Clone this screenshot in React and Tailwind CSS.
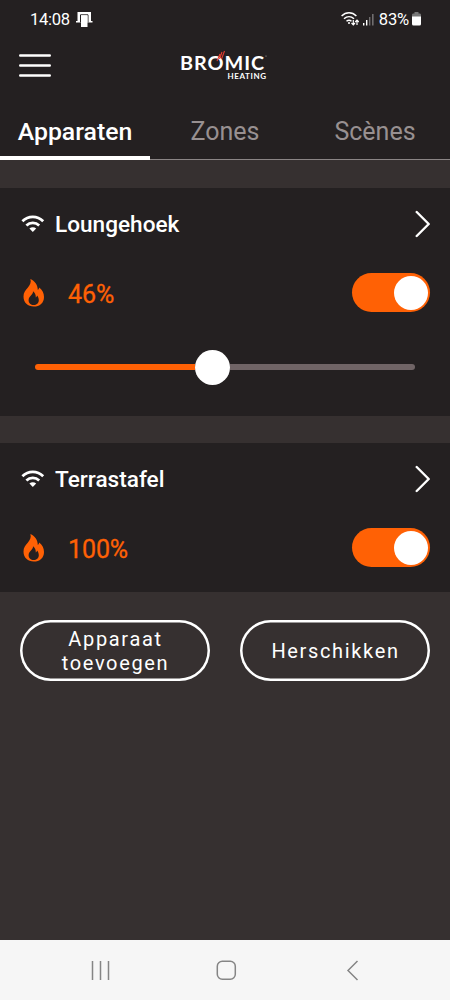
import React from 'react';

function Wifi() {
  return (
    <svg className="w-[24px] h-[20px] shrink-0" viewBox="0 0 24 20" fill="none" stroke="#fff" strokeWidth="2.7">
      <path d="M1.4 7.3C7.3 1.3 16.3 1.3 22.2 7.3" />
      <path d="M5.4 11.5C9 8 14.6 8 18.2 11.5" />
      <path d="M11.8 18L8.4 14.6C10.4 12.8 13.2 12.8 15.2 14.6Z" fill="#fff" stroke="none" />
    </svg>
  );
}

function Flame() {
  return (
    <svg className="w-[22px] h-[28px] shrink-0" viewBox="0 0 22 28" fill="#ff6105" fillRule="evenodd">
      <path d="M7.4 0C11.6 1.8 14.9 6 14.8 11C15.6 10.4 16 9.7 16.2 8.6C19.4 11 21 14.2 21 18C21 24 16.6 27.6 10.8 27.6C4.9 27.6 0.5 23.8 0.5 17.6C0.5 9.6 9.6 7.6 7.4 0ZM10 12.2C10.4 15.8 5.6 17 5.6 21.2C5.6 24.2 7.9 26 10.6 26C13.6 26 15.8 24.2 15.8 21.2C15.8 19.2 15 17.6 14 16.6C13.9 17.6 13.5 18.2 12.8 18.5C13 16 12 13.6 10 12.2Z" />
    </svg>
  );
}

function Device({ name, value, level }) {
  return (
    <section className={level ? "bg-[#242021] h-[228px]" : "bg-[#242021] h-[149px]"}>
      <div className="h-[72px] pl-[21px] pr-[20px] flex items-center">
        <Wifi />
        <h2 className="ml-[10px] mt-[2px] flex-1 text-[22.6px] leading-none font-medium text-white">{name}</h2>
        <svg className="w-[18px] h-[28px]" viewBox="0 0 18 28" fill="none" stroke="#fff" strokeWidth="2.4" strokeLinecap="round" strokeLinejoin="round">
          <path d="M4.7 2L16.7 14L4.7 26" />
        </svg>
      </div>
      <div className="h-[65px] pl-[23px] pr-[20px] flex items-center">
        <Flame />
        <span className="ml-[23px] mt-[3px] flex-1 text-[25px] leading-none tracking-[-0.1px] [-webkit-text-stroke:0.3px_#ff6105] text-[#ff6105]">{value}</span>
        <div className="w-[78px] h-[39px] rounded-full bg-[#ff6105] flex items-center justify-end pr-[2px]">
          <div className="size-[34px] rounded-full bg-white" />
        </div>
      </div>
      {level && (
        <div className="h-[84px] mx-[35px] flex items-center">
          <div className="h-[6px] rounded-l-full bg-[#ff6105]" style={{ width: `${level - 4}%` }} />
          <div className="size-[35px] rounded-full bg-white shrink-0" />
          <div className="h-[6px] flex-1 rounded-r-full bg-[#706466]" />
        </div>
      )}
    </section>
  );
}

export default function App() {
  return (
    <div className="w-[450px] h-[1000px] bg-[#363030] flex flex-col font-['Roboto',sans-serif] overflow-hidden">
      <div className="h-[38px] shrink-0 bg-[#242021] flex items-center pl-[30px] pr-[29px] text-white text-[16.6px] tracking-[-0.3px] leading-none">
        <span className="mt-[2px]">14:08</span>
        <svg className="ml-[6px] w-[17px] h-[16px]" viewBox="0 0 17 16">
          <path d="M1.5 1H15V10H16.5V11.5H0V10H1.5Z" fill="#fff" />
          <path d="M4.5 11.5V3.8H12V11.5" fill="none" stroke="#242021" />
          <rect x="5" y="4.3" width="6.5" height="11.7" fill="#fff" />
        </svg>
        <div className="flex-1" />
        <svg className="w-[18px] h-[14px]" viewBox="0 0 18 14" fill="none" stroke="#fff" strokeWidth="1.5">
          <path d="M.6 4C5-.2 11-.2 15.4 4M3 6.8C6 4 10 4 13 6.8M5.5 9.3C7 8 9 8 10.5 9.3" />
          <circle cx="8" cy="11" r="1" fill="#fff" stroke="none" />
          <path d="M12.3 8V12.5M10.5 11L12.3 12.8L14 11M16 13V8.5M14.2 10L16 8.2L17.8 10" strokeWidth="1.2" />
        </svg>
        <svg className="ml-[3px] w-[13px] h-[13px]" viewBox="0 0 13 13" fill="#fff">
          <path d="M1 10h1.4v2.5H1zM4 7h1.4v5.5H4z" />
          <path d="M7 4h1.4v8.5H7zM10 1h1.6v11.5H10z" opacity=".35" />
        </svg>
        <span className="ml-[4px] mt-[2px] tracking-[-0.2px]">83%</span>
        <svg className="ml-[3px] w-[9px] h-[14px]" viewBox="0 0 9 14">
          <path d="M2.5 0h4v1.5H8Q9 1.5 9 3V5H0V3Q0 1.5 1 1.5H2.5Z" fill="#777" />
          <path d="M0 4.5H9V12Q9 13.5 7.5 13.5H1.5Q0 13.5 0 12Z" fill="#fff" />
        </svg>
      </div>
      <header className="relative h-[66px] shrink-0 bg-[#242021] pl-[19px] pt-[16px]">
        <svg className="w-[32px] h-[24px]" viewBox="0 0 32 24" fill="none" stroke="#fff" strokeWidth="2.4" strokeLinecap="round">
          <path d="M1.2 1.5H30.8M1.2 11.5H30.8M1.2 21.5H30.8" />
        </svg>
        <div className="absolute left-[180px] top-[17px] w-[88px] flex flex-col text-white font-['Lato',sans-serif] font-bold">
          <span className="h-[16px] origin-left scale-x-[1.1] text-[18px] leading-[16px] tracking-[0.9px] whitespace-nowrap">BROMIC</span>
          <span className="h-[8px] mt-px ml-[47.5px] text-[8px] leading-[8px] tracking-[0.6px]">HEATING</span>
        </div>
        <svg className="absolute left-[213px] top-[12px] w-[54px] h-[14px]" viewBox="0 0 54 14">
          <path d="M4 11L7 4M6.5 9L9 2M8.5 9L11.5 1" fill="none" stroke="#e43c2f" strokeWidth="1.1" />
          <circle cx="53" cy="6" r=".6" fill="#aaa" />
        </svg>
      </header>
      <nav className="h-[56px] shrink-0 bg-[#242021] border-b border-[#8b8585] grid grid-cols-3 text-[25px] leading-[56px] text-center text-[#989091]">
        <div className="h-[56px] border-b-[4px] border-white text-white text-[24.8px] font-medium">Apparaten</div>
        <div>Zones</div>
        <div>Scènes</div>
      </nav>
      <main className="flex-1 pt-[28px] flex flex-col">
        <Device name="Loungehoek" value="46%" level={46} />
        <div className="h-[27px]" />
        <Device name="Terrastafel" value="100%" />
        <div className="mt-[28px] px-[20px] grid grid-cols-2 gap-[30px] text-white text-[20px] leading-[24px] tracking-[1.65px] text-center">
          <button className="h-[61px] pl-[1px] rounded-full shadow-[inset_0_0_0_2.5px_white]">Apparaat<br />toevoegen</button>
          <button className="h-[61px] pl-[1px] rounded-full shadow-[inset_0_0_0_2.5px_white]">Herschikken</button>
        </div>
      </main>
      <footer className="h-[60px] shrink-0 bg-[#f6f6f6]">
        <svg className="w-[450px] h-[60px]" viewBox="0 0 450 60" fill="none" stroke="#858585" strokeWidth="1.5">
          <path d="M92.5 21V40M100.5 21V40M108.5 21V40" />
          <rect x="217.3" y="21.3" width="18" height="18" rx="5" />
          <path d="M357.5 21L348 30.5L357.5 40" />
        </svg>
      </footer>
    </div>
  );
}
